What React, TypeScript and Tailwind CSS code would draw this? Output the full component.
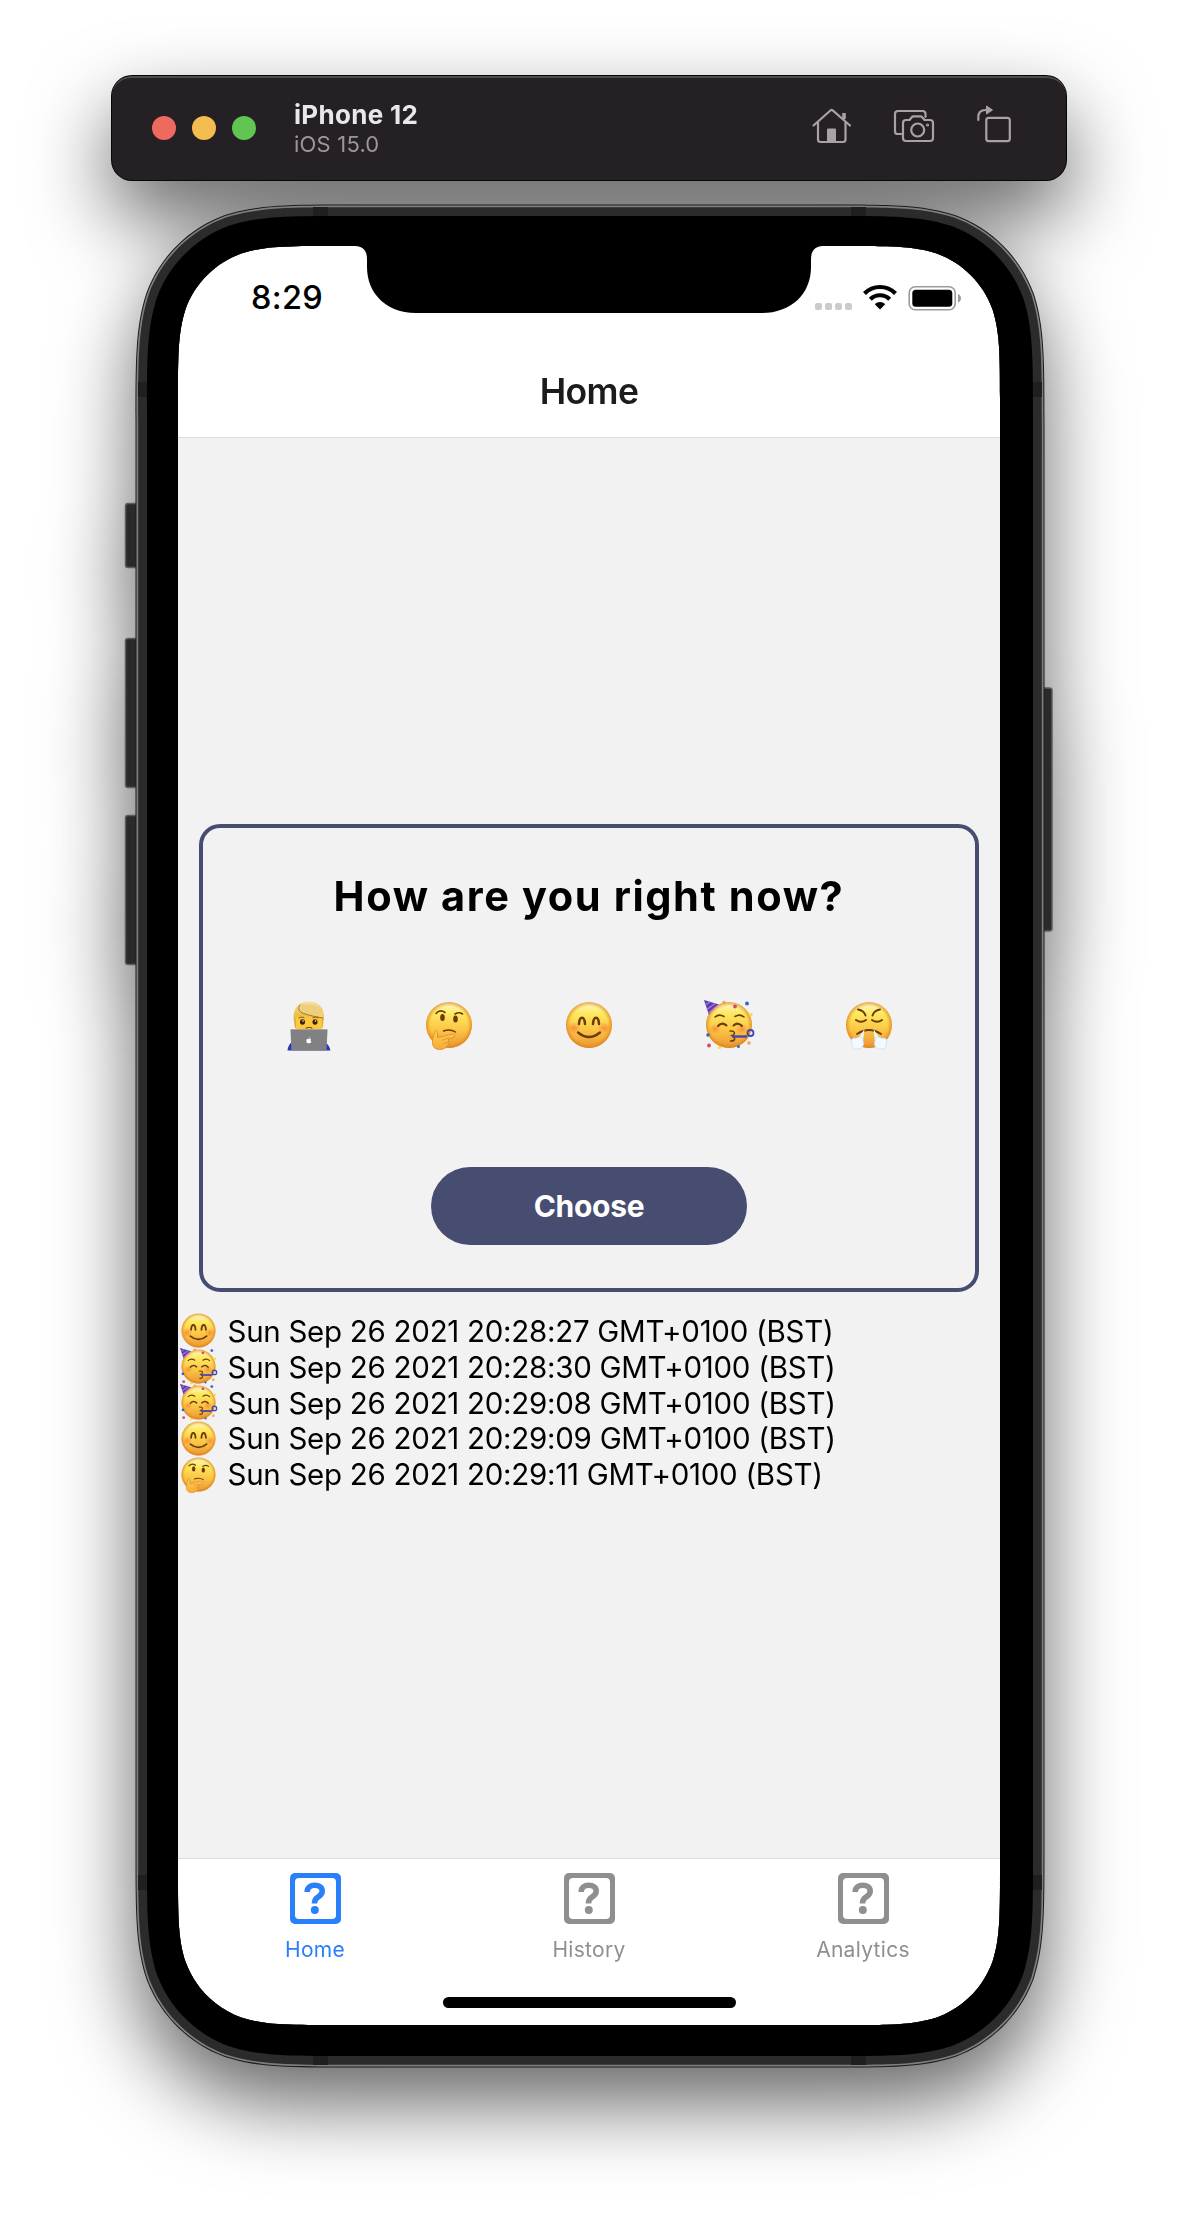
import React from "react";

type Mood = "technologist" | "thinking" | "smile" | "party" | "huff";

const FONT = "font-['Inter','Liberation_Sans',sans-serif]";

function Gradients() {
  return (
    <svg className="absolute h-0 w-0" aria-hidden="true">
      <defs>
        <linearGradient id="face" x1="0" y1="0" x2="0" y2="1">
          <stop offset="0" stopColor="#fffbd0" />
          <stop offset="0.25" stopColor="#fde95f" />
          <stop offset="0.6" stopColor="#fbc646" />
          <stop offset="1" stopColor="#eb9532" />
        </linearGradient>
        <radialGradient id="rim">
          <stop offset="0.8" stopColor="#e38a20" stopOpacity="0" />
          <stop offset="1" stopColor="#d97a18" stopOpacity="0.7" />
        </radialGradient>
        <radialGradient id="blush">
          <stop offset="0" stopColor="#f9713a" stopOpacity="0.65" />
          <stop offset="1" stopColor="#f9713a" stopOpacity="0" />
        </radialGradient>
        <linearGradient id="hair" x1="0" y1="0" x2="0" y2="1">
          <stop offset="0" stopColor="#f5dfae" />
          <stop offset="0.5" stopColor="#ecc04c" />
          <stop offset="1" stopColor="#d8a030" />
        </linearGradient>
        <linearGradient id="hand" x1="0" y1="0" x2="0" y2="1">
          <stop offset="0" stopColor="#fbd24e" />
          <stop offset="1" stopColor="#f7a93a" />
        </linearGradient>
      </defs>
    </svg>
  );
}

function Face() {
  return (
    <>
      <circle cx="25" cy="25" r="23" fill="url(#face)" />
      <circle cx="25" cy="25" r="23" fill="url(#rim)" />
    </>
  );
}

function Emoji({ mood, className }: { mood: Mood; className: string }) {
  const line = { fill: "none", stroke: "#6b3a0a", strokeLinecap: "round" as const };
  return (
    <svg viewBox="0 0 50 50" className={`overflow-visible ${className}`} role="img" aria-label={mood}>
      {mood === "technologist" && (
        <>
          <path d="M3.5 50.5C4 46 6 42.5 10 41H39C43 42.5 45.5 46 46.5 50.5Z" fill="#2338bd" />
          <path d="M9.5 18C9.5 6 16 1.5 25 1.5S40 6.5 40 18L38.5 28H11Z" fill="url(#hair)" />
          <path d="M12 17C16 15 31 18 37.500 16L38 29H12Z" fill="#fcc83c" />
          <path d="M15 10C19 15 27 17.5 39 17L39 12L30 5L18 4Z" fill="#f0cf7c" />
          <path d="M16 5C13 8 15 12 20 13.5C26 16 32 16.5 38.500 18" {...line} stroke="#a87420" strokeWidth="1" />
          <ellipse cx="18.5" cy="22" rx="2.5" ry="2.8" fill="#3b1e0b" />
          <ellipse cx="31" cy="22" rx="2.5" ry="2.8" fill="#3b1e0b" />
          <circle cx="19" cy="21" r=".8" fill="#fff" />
          <circle cx="31.5" cy="21" r=".8" fill="#fff" />
          <path d="M15 18Q18 16.500 20 17.700M29 17.700Q32 16.500 34.5 18" {...line} stroke="#a5701c" strokeWidth="1.3" />
          <path d="M22 28Q25 26.5 28 28" {...line} strokeWidth="1" />
          <path d="M7.5 29H42.5Q43.5 29 43.5 30L42.5 50.5H7.5L6.5 30Q6.5 29 7.5 29Z" fill="#818184" />
          <path d="M7 29.5H43" stroke="#a5a5a8" strokeWidth="1" />
          <path d="M25 39C22.8 38 22 40 22.5 41.8C23 43.3 24 43.6 25 43.1C26 43.6 27 43 27.4 41.8C26.2 41 26.3 39.6 27.2 39C26.5 38.4 25.5 38.7 25 39ZM25 38.4Q25.1 37 26.2 36.8Q26.1 38 25 38.4Z" fill="#fff" />
        </>
      )}
      {mood === "thinking" && (
        <>
          <Face />
          <path d="M12 13.5Q16 8.8 21 12.5M31 14Q35 11.5 38.5 14" {...line} strokeWidth="1.6" />
          <ellipse cx="18.5" cy="17.5" rx="2.3" ry="3.6" fill="#6b3a0a" />
          <ellipse cx="31.5" cy="19" rx="2.3" ry="3.6" fill="#6b3a0a" />
          <path d="M19.5 31Q26 28.5 31.5 32" {...line} strokeWidth="1.4" />
          <path
            d="M10.5 31.5C11.5 30 13.5 31 13.5 34V37.5C19 37 24 34.5 29 34.2C31.5 34 31.5 36.5 29 37.5L24 39.5L24.5 40.5C26 44 22 49.5 16 49.5C10 49.5 8.2 46 8.5 41C8.5 37.5 10.5 34 10.5 31.5Z"
            fill="url(#hand)"
            stroke="#df8825"
            strokeWidth=".8"
          />
          <path d="M19 40L25 37.8M20 43.5L24 42.5" {...line} stroke="#df8825" strokeWidth=".8" />
        </>
      )}
      {mood === "smile" && (
        <>
          <Face />
          <ellipse cx="9.5" cy="28" rx="7" ry="6" fill="url(#blush)" />
          <ellipse cx="40.5" cy="28" rx="7" ry="6" fill="url(#blush)" />
          <path d="M15 24C15.5 15.5 20.5 15.5 21 24M29 24C29.5 15.5 34.5 15.5 35 24" {...line} strokeWidth="2.5" />
          <path d="M14 32.5Q25 41.5 36 32.5" {...line} strokeWidth="2.3" />
        </>
      )}
      {mood === "party" && (
        <>
          <Face />
          <ellipse cx="11" cy="29" rx="6" ry="5" fill="url(#blush)" />
          <ellipse cx="38" cy="29" rx="6" ry="5" fill="url(#blush)" />
          <path d="M0 0L15 4.5Q8 8 5 15Z" fill="#4545b4" />
          <path d="M1.5 5L6 1.8M2.8 9.5L11 3.5M4.3 13.5L14 5" stroke="#d46bc4" strokeWidth="1.4" />
          <path d="M11 17Q15 13.5 20 16.5M31 16.5Q36 13.5 40 17" {...line} strokeWidth="1.6" />
          <path d="M14 26Q18 21.5 22.5 25.5M29.5 25.5Q34 21.5 38 26" {...line} strokeWidth="2" />
          <path d="M26 31C31 30.5 32 34 28 35.5C32 37 31.5 41.5 26.5 41" {...line} strokeWidth="1.4" />
          <path d="M28 36.5H43" stroke="#4147b2" strokeWidth="2.4" />
          <circle cx="46.5" cy="33" r="3" fill="none" stroke="#4147b2" strokeWidth="1.8" />
          <circle cx="43" cy="3.5" r="1.9" fill="#3763c8" />
          <circle cx="31" cy="6.5" r="1.9" fill="#d4496a" />
          <circle cx="20" cy="2.5" r="1.7" fill="#f3a343" />
          <circle cx="47" cy="14.5" r="1.7" fill="#f7e04c" />
          <circle cx="4" cy="35" r="1.8" fill="#3763c8" />
          <circle cx="5" cy="45.5" r="1.9" fill="#d4496a" />
          <circle cx="15.5" cy="47.5" r="1.6" fill="#f7d94c" />
          <circle cx="34.5" cy="46.5" r="1.5" fill="#3763c8" />
          <circle cx="45" cy="43" r="1.7" fill="#f3a343" />
        </>
      )}
      {mood === "huff" && (
        <>
          <Face />
          <path d="M14 9.5Q20 10.5 21.5 15.5M36 9.5Q30 10.5 28.5 15.5" {...line} strokeWidth="1.9" />
          <path d="M12 20Q17 23.5 22 20M28 20Q33 23.5 38 20" {...line} strokeWidth="2" />
          <path d="M13 34Q25 26 37 34" {...line} strokeWidth="1.8" />
          <path d="M20.5 29L19 42L13 40ZM29.5 29L31 42L37 40Z" fill="#eaf3fb" />
          <path d="M8 43C5.5 40 9 37 12 38.5C14 36 19.5 37 19 41C20.5 45 18.5 49 14 49C9.5 50 6.5 47 8 43Z" fill="#f4f9ff" stroke="#c2dcf2" strokeWidth=".8" />
          <path d="M42 43C44.5 40 41 37 38 38.5C36 36 30.5 37 31 41C29.5 45 31.5 49 36 49C40.5 50 43.5 47 42 43Z" fill="#f4f9ff" stroke="#c2dcf2" strokeWidth=".8" />
        </>
      )}
    </svg>
  );
}

function HomeIcon() {
  return (
    <svg viewBox="0 0 40 36" className="h-9 w-10" fill="none" stroke="#a8a1a7" strokeWidth="2.2" strokeLinecap="round" strokeLinejoin="round">
      <path d="M1.5 17.5L18.7 2.3Q19.7 1.5 20.7 2.3L38 17.5" />
      <path d="M6 14.5V31.5Q6 34 8.5 34H31Q33.500 34 33.5 31.5V14.5" />
      <path d="M32 5V11" strokeWidth="3.6" strokeLinecap="butt" />
      <path d="M15 33.5V21.5Q15 20.5 16 20.5H23Q24 20.5 24 21.5V33.5Z" fill="#a8a1a7" stroke="none" />
    </svg>
  );
}

function CameraIcon() {
  return (
    <svg viewBox="0 0 42 34" className="h-[34px] w-[42px]" fill="none" stroke="#a8a1a7" strokeWidth="2.2" strokeLinecap="round" strokeLinejoin="round">
      <path d="M8.5 25H4.5Q2 25 2 22.5V5Q2 2 5 2H29.5Q32.5 2 32.5 5V8" />
      <path d="M13 11H16.5L19 8Q19.5 7.3 20.5 7.3H27.5Q28.5 7.3 29 8L31.5 11H37Q40 11 40 14V29Q40 32 37 32H13Q10 32 10 29V14Q10 11 13 11Z" />
      <circle cx="24.7" cy="21" r="6.5" />
      <circle cx="34.5" cy="16" r="1" strokeWidth="1.2" />
    </svg>
  );
}

function RotateIcon() {
  return (
    <svg viewBox="0 0 36 38" className="h-[38px] w-9" fill="none" stroke="#a8a1a7" strokeWidth="2.2" strokeLinejoin="round">
      <path d="M2.3 15V12.500Q2.3 5 9.5 5H11" strokeLinecap="round" />
      <path d="M10.5 1L16.5 5L10.5 9Z" fill="#a8a1a7" strokeWidth="1" />
      <rect x="10.3" y="12.800" width="23.5" height="23.4" rx="2.5" />
    </svg>
  );
}

function Toolbar() {
  return (
    <header className="flex h-[104px] w-[954px] items-center rounded-[20px] border-t-2 border-[#4e4b4e] bg-[#252024] pl-[40px] pr-[54px] shadow-[0_0_0_1px_#060606]">
      <div className="-mt-0.5 flex gap-4">
        <span className="size-6 rounded-full bg-[#ee6a5f]" />
        <span className="size-6 rounded-full bg-[#f5bd4f]" />
        <span className="size-6 rounded-full bg-[#61c554]" />
      </div>
      <div className="ml-[38px]">
        <div className="h-[30px] whitespace-nowrap text-[26px] font-bold leading-[30px] tracking-[0.3px] text-[#e9e7e9]">iPhone 12</div>
        <div className="h-[28px] whitespace-nowrap text-[22px] leading-[28px] tracking-[0.2px] text-[#9c969b]">iOS 15.0</div>
      </div>
      <div className="-mt-1.5 ml-auto flex items-center gap-[41px]">
        <HomeIcon />
        <CameraIcon />
        <div className="-mt-1">
          <RotateIcon />
        </div>
      </div>
    </header>
  );
}

/* Rounded rectangle with continuous-curvature corners. */
function squircle(x0: number, y0: number, x1: number, y1: number, r: number) {
  const a = 1.52866 * r;
  const b = 1.08849 * r;
  const c = 0.86841 * r;
  const d = 0.63149 * r;
  const e = 0.07491 * r;
  const f = 0.37282 * r;
  const g = 0.16906 * r;
  return [
    `M${x0 + a} ${y0}H${x1 - a}`,
    `C${x1 - b} ${y0} ${x1 - c} ${y0} ${x1 - d} ${y0 + e}`,
    `C${x1 - f} ${y0 + g} ${x1 - g} ${y0 + f} ${x1 - e} ${y0 + d}`,
    `C${x1} ${y0 + c} ${x1} ${y0 + b} ${x1} ${y0 + a}V${y1 - a}`,
    `C${x1} ${y1 - b} ${x1} ${y1 - c} ${x1 - e} ${y1 - d}`,
    `C${x1 - g} ${y1 - f} ${x1 - f} ${y1 - g} ${x1 - d} ${y1 - e}`,
    `C${x1 - c} ${y1} ${x1 - b} ${y1} ${x1 - a} ${y1}H${x0 + a}`,
    `C${x0 + b} ${y1} ${x0 + c} ${y1} ${x0 + d} ${y1 - e}`,
    `C${x0 + f} ${y1 - g} ${x0 + g} ${y1 - f} ${x0 + e} ${y1 - d}`,
    `C${x0} ${y1 - c} ${x0} ${y1 - b} ${x0} ${y1 - a}V${y0 + a}`,
    `C${x0} ${y0 + b} ${x0} ${y0 + c} ${x0 + e} ${y0 + d}`,
    `C${x0 + g} ${y0 + f} ${x0 + f} ${y0 + g} ${x0 + d} ${y0 + e}`,
    `C${x0 + c} ${y0} ${x0 + b} ${y0} ${x0 + a} ${y0}Z`,
  ].join("");
}

/* Device hardware: metal rim, black bezel with the screen cut out, notch and side keys. */
function Bezel() {
  const screen = squircle(43, 42, 865, 1821, 100);
  const ring = (i: number) => squircle(i, i, 910 - i, 1864 - i, 142 - i);
  return (
    <svg viewBox="0 0 910 1864" className="pointer-events-none absolute inset-0 h-full w-full overflow-visible" fillRule="evenodd">
      <g fill="#2a2a2a" stroke="#5d5d5d" strokeWidth="1.5">
        <rect x="-9.5" y="299.5" width="14" height="64" rx="2.5" />
        <rect x="-9.5" y="434.5" width="14" height="149" rx="2.5" />
        <rect x="-9.5" y="611.5" width="14" height="149" rx="2.5" />
        <rect x="905" y="484" width="12" height="243" rx="2.5" />
      </g>
      <path d={ring(0.5) + screen} fill="#1c1c1c" />
      <path d={ring(1.5) + screen} fill="#7f7f7f" />
      <path d={ring(3.2) + screen} fill="#2b2b2b" />
      <g fill="#1f1f1f">
        <rect x="178" y="3" width="15" height="10" />
        <rect x="716" y="3" width="15" height="10" />
        <rect x="178" y="1851" width="15" height="10" />
        <rect x="716" y="1851" width="15" height="10" />
        <rect x="3" y="178" width="10" height="15" />
        <rect x="897" y="178" width="10" height="15" />
        <rect x="3" y="1671" width="10" height="15" />
        <rect x="897" y="1671" width="10" height="15" />
      </g>
      <path d={squircle(12, 12, 898, 1852, 130) + screen} fill="#000" />
      <path d="M218 41V42H220C228 42 232 47 232 55V63C232 90 252 109 281 109H627C656 109 676 90 676 63V55C676 47 680 42 688 42H690V41Z" fill="#000" />
    </svg>
  );
}

function StatusBar() {
  return (
    <div className="flex h-[106px] items-start justify-between pl-[73px] pr-[38px]">
      <span className="mt-[32px] text-[32.5px] font-medium leading-[40px] tracking-[0.3px] text-black">8:29</span>
      <div className="mt-[38px] flex h-[28px] items-end">
        <div className="mb-[2px] flex gap-[3px]">
          {[0, 1, 2, 3].map((i) => (
            <span key={i} className="size-[7px] rounded-[2px] bg-[#cbcbcb]" />
          ))}
        </div>
        <svg viewBox="0 0 34 26" className="mb-[2px] ml-[11px] h-[26px] w-[34px]" fill="none" stroke="#000" strokeWidth="4.2">
          <path d="M1.5 9.5C10 0.8 24 0.8 32.5 9.5" />
          <path d="M7.3 15.2C12.6 9.9 21.4 9.9 26.7 15.2" />
          <path d="M17 25.5L11.8 20.2C14.7 17.3 19.3 17.3 22.2 20.2Z" fill="#000" stroke="none" />
        </svg>
        <svg viewBox="0 0 54 26" className="mb-[1px] ml-[11px] h-[26px] w-[54px]">
          <rect x="1.2" y="1.7" width="46" height="23" rx="6" fill="#fff" stroke="#9b9b9b" strokeWidth="1.6" />
          <rect x="4.3" y="4.8" width="40" height="17" rx="3.5" fill="#000" />
          <path d="M50 9C54 10.5 54 16 50 17.5Z" fill="#9b9b9b" />
        </svg>
      </div>
    </div>
  );
}

function MoodCard() {
  const moods: Mood[] = ["technologist", "thinking", "smile", "party", "huff"];
  return (
    <section className="mx-[21px] flex h-[468px] flex-col items-center rounded-[21px] border-4 border-[#464d70]">
      <h2 className="mt-[42px] h-[52px] whitespace-nowrap text-[41.5px] font-bold leading-[52px] tracking-[1.6px] text-black">How are you right now?</h2>
      <div className="mt-[78px] flex h-[50px] w-full justify-between pl-[80.5px] pr-[81px]">
        {moods.map((m) => (
          <Emoji key={m} mood={m} className="size-[50px]" />
        ))}
      </div>
      <button className="mt-[117px] h-[78px] w-[316px] rounded-full bg-[#464d70] text-[30px] font-bold leading-[77px] tracking-[-0.3px] text-white">Choose</button>
    </section>
  );
}

function History() {
  const entries: { mood: Mood; at: string }[] = [
    { mood: "smile", at: "Sun Sep 26 2021 20:28:27 GMT+0100 (BST)" },
    { mood: "party", at: "Sun Sep 26 2021 20:28:30 GMT+0100 (BST)" },
    { mood: "party", at: "Sun Sep 26 2021 20:29:08 GMT+0100 (BST)" },
    { mood: "smile", at: "Sun Sep 26 2021 20:29:09 GMT+0100 (BST)" },
    { mood: "thinking", at: "Sun Sep 26 2021 20:29:11 GMT+0100 (BST)" },
  ];
  return (
    <ul className="mt-[21px]">
      {entries.map((e) => (
        <li key={e.at} className="flex h-[35.8px] items-center pl-[2px]">
          <Emoji mood={e.mood} className="size-[37px] shrink-0" />
          <span className="ml-[10.5px] whitespace-nowrap text-[29.5px] leading-[36px] tracking-[-0.28px] text-black">{e.at}</span>
        </li>
      ))}
    </ul>
  );
}

function TabBar() {
  const tabs = [
    { label: "Home", tone: "text-[#2a7ffb]" },
    { label: "History", tone: "text-[#8f8f90]" },
    { label: "Analytics", tone: "text-[#8f8f90]" },
  ];
  return (
    <nav className="flex h-[167px] flex-col items-center border-t-[1.5px] border-[#dcdcdc] bg-white">
      <div className="grid w-full grid-cols-3">
        {tabs.map((t) => (
          <div key={t.label} className={`flex flex-col items-center pt-[13.5px] ${t.tone}`}>
            <span className="flex size-[51px] items-center justify-center rounded-[5px] bg-current p-[5px]">
              <span className="flex size-full items-center justify-center rounded-[4px] bg-white">
                <svg viewBox="0 0 22 32" className="h-8 w-[22px]" fill="none" stroke="currentColor" strokeWidth="5.600">
                  <path d="M3.2 10C3.2 5.200 6.5 3.300 10.8 3.300C15.5 3.300 18.2 5.600 18.2 9.200C18.2 12.3 16 13.800 13.6 15.300C11.300 16.7 10.5 18 10.5 21.5" />
                  <circle cx="10.8" cy="28" r="4" fill="currentColor" stroke="none" />
                </svg>
              </span>
            </span>
            <span className="mt-[12px] text-[21px] leading-[28px] tracking-[0.3px]">{t.label}</span>
          </div>
        ))}
      </div>
      <div className="mt-[33px] h-[11px] w-[293px] rounded-full bg-black" />
    </nav>
  );
}

function Phone() {
  return (
    <div className="relative ml-[2px] mt-[24px] h-[1864px] w-[910px] px-[43px] pt-[42px]">
      <main className="flex h-[1779px] w-[822px] flex-col overflow-hidden rounded-[86px] bg-[#f2f2f2]">
        <div className="h-[192px] shrink-0 border-b-[1.5px] border-[#dcdcdc] bg-white">
          <StatusBar />
          <h1 className="h-[80px] text-center text-[35.5px] font-semibold leading-[80px] tracking-[-0.6px] text-[#1c1c1e]">Home</h1>
        </div>
        <div className="flex grow flex-col pt-[386px]">
          <MoodCard />
          <History />
        </div>
        <TabBar />
      </main>
      <Bezel />
    </div>
  );
}

export default function App() {
  return (
    <div className={`h-[2220px] w-[1178px] overflow-hidden bg-white ${FONT}`}>
      <Gradients />
      <div className="flex flex-col items-center pt-[76px] [filter:drop-shadow(0_36px_40px_rgba(0,0,0,0.6))]">
        <Toolbar />
        <Phone />
      </div>
    </div>
  );
}
